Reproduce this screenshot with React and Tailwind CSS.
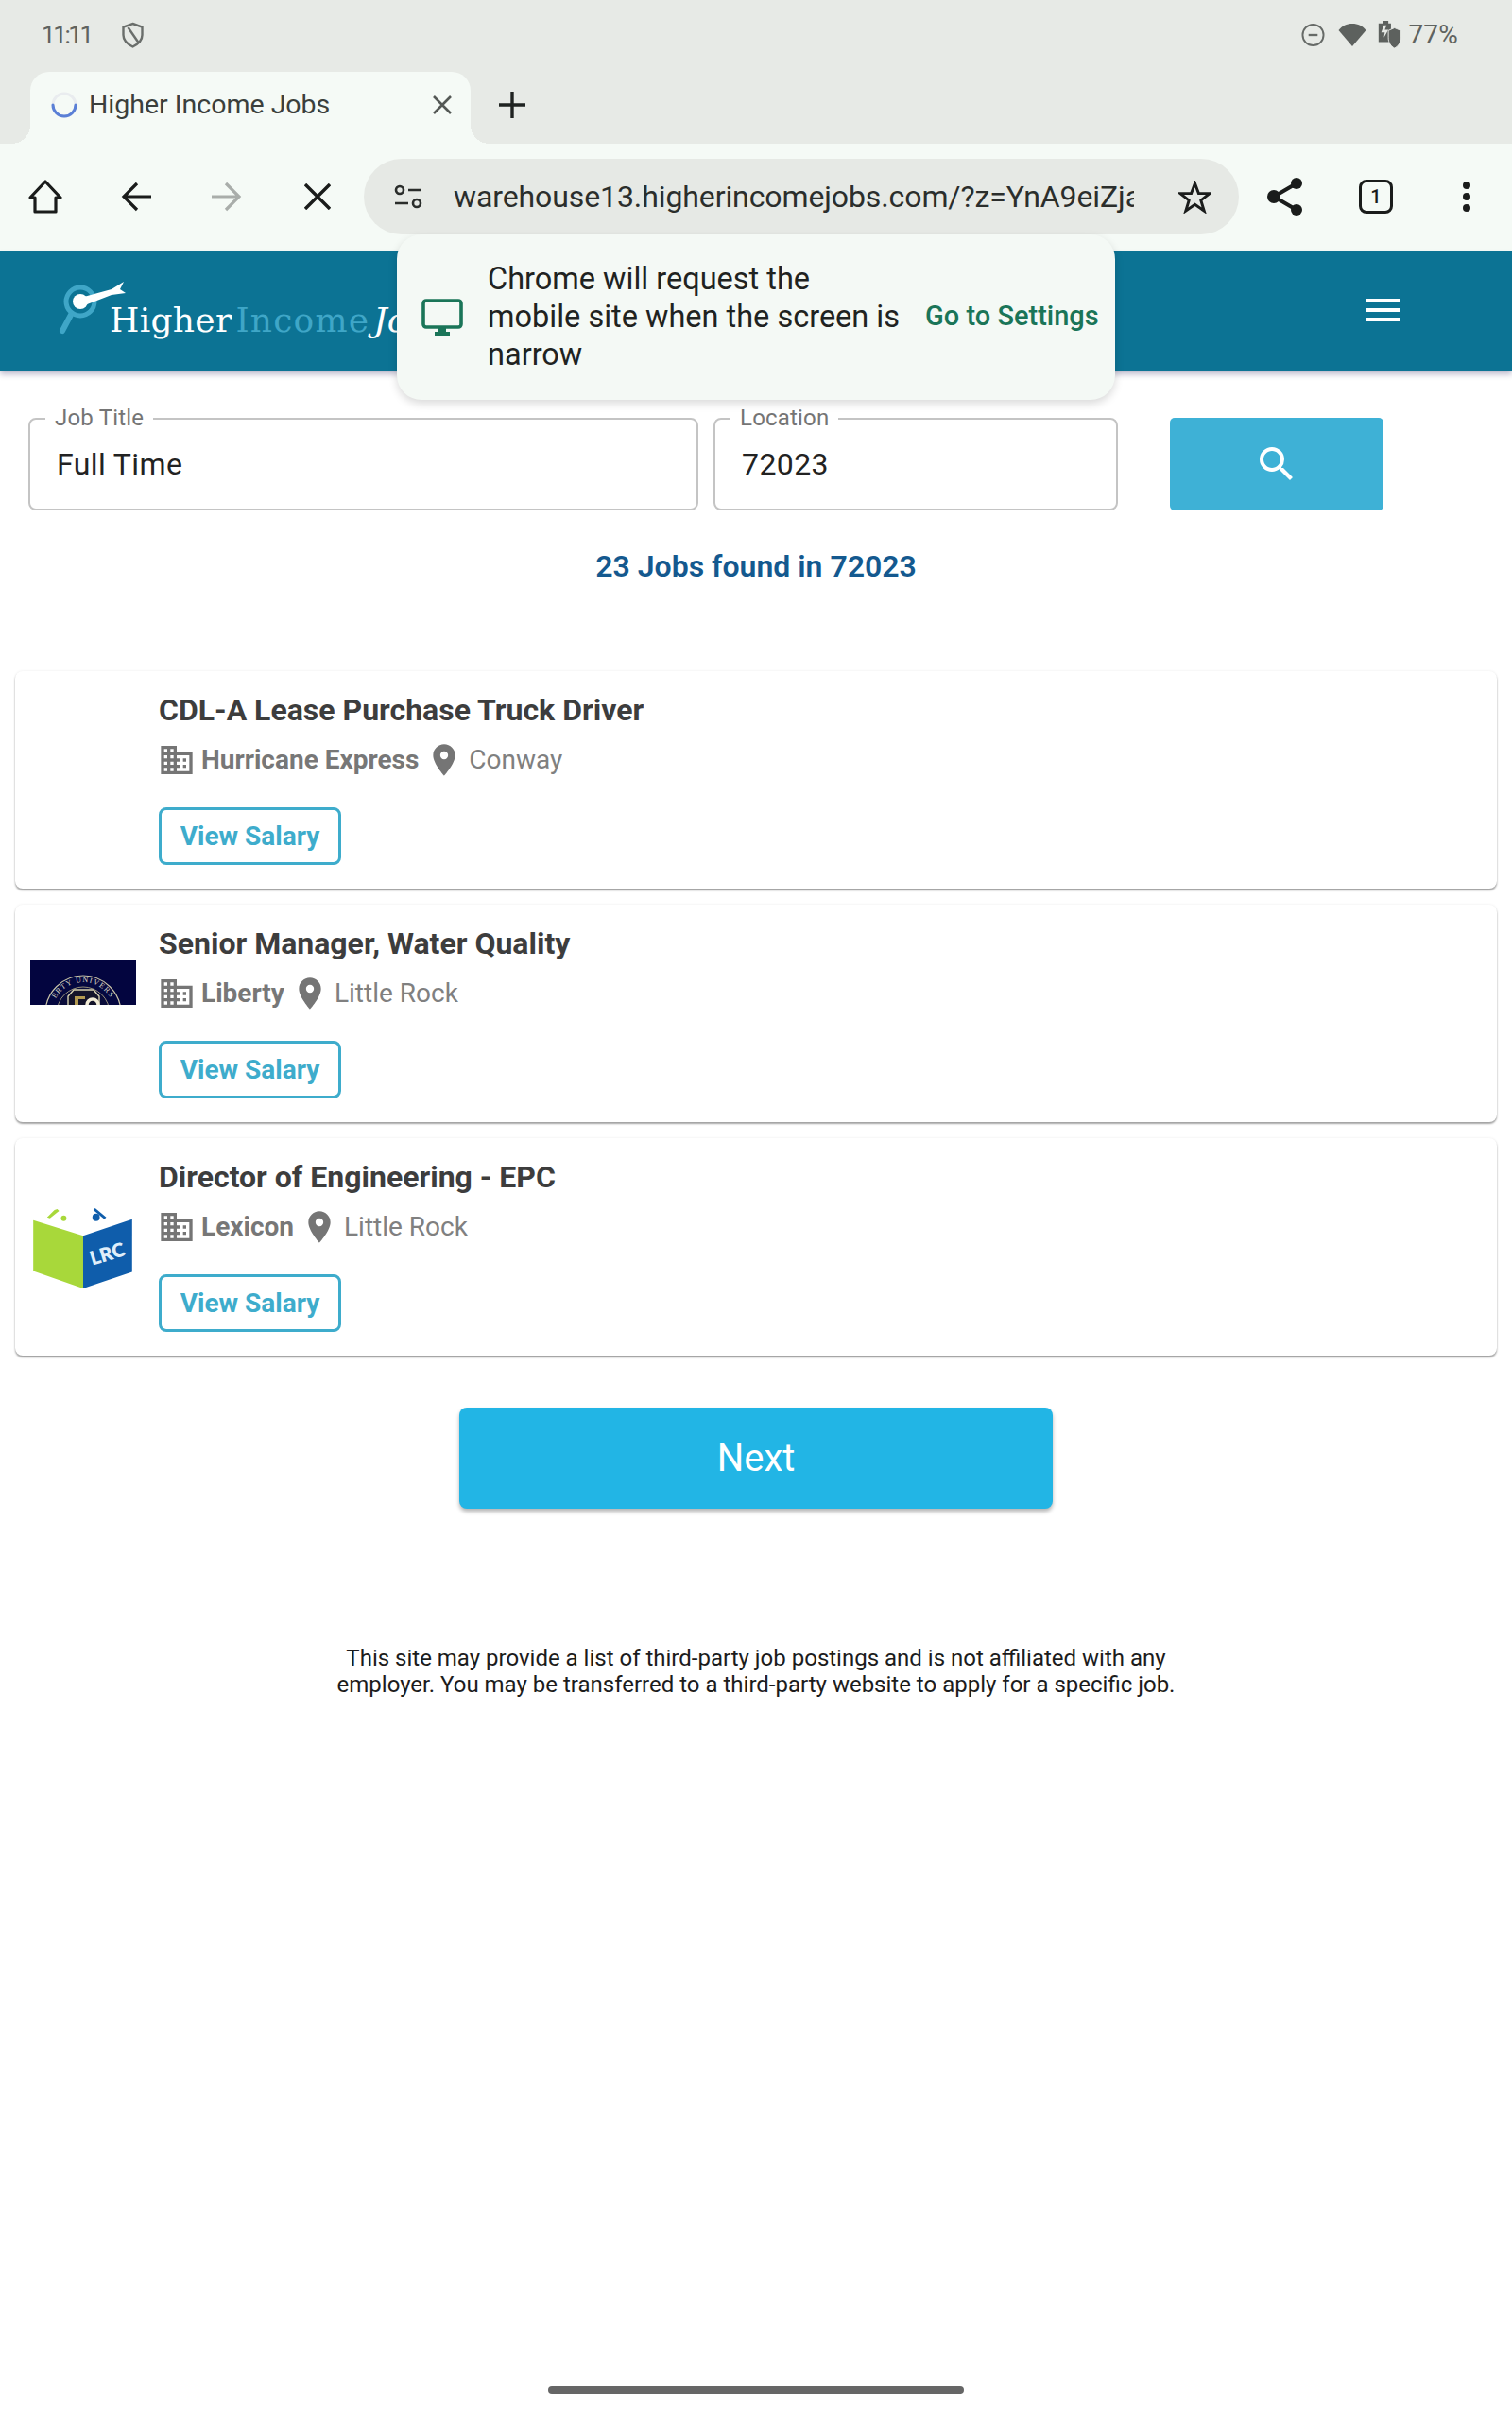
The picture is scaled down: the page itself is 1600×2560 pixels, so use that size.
import React from "react";
import { MdDomain, MdLocationOn, MdMenu, MdSearch } from "react-icons/md";

const roboto = "font-['Roboto',sans-serif]";

function Job({ title, company, place, logo, mt }) {
  return (
    <div className={`mx-4 ${mt} h-[230px] bg-white rounded-lg shadow-[0_2px_2px_rgba(0,0,0,0.35),0_0_3px_rgba(0,0,0,0.08)] flex`}>
      <div className="w-[152px] pl-4 shrink-0">{logo}</div>
      <div className="flex flex-col">
        <div className="mt-[21px] h-[40px] text-[32px] leading-[40px] font-bold text-[#3d3d3d]">{title}</div>
        <div className="mt-[13px] h-[40px] flex items-center text-[28px] text-[#777]">
          <MdDomain className="w-[40px] h-[40px] text-[#757575] -ml-[1px] mr-[6px]" />
          <span className="font-bold">{company}</span>
          <MdLocationOn className="w-[40px] h-[40px] text-[#757575] ml-[7px]" />
          <span className="ml-[6px] text-[#808080]">{place}</span>
        </div>
        <div className="mt-[30px] w-[193px] h-[61px] border-[3px] border-[#3eaccc] rounded-lg flex items-center justify-center text-[28px] font-bold text-[#3eaccc]">
          View Salary
        </div>
      </div>
    </div>
  );
}

function Field({ label, value, className }) {
  return (
    <div className={`relative h-[98px] border-2 border-[#c4c4c4] rounded-lg flex items-center ${className}`}>
      <span className="absolute -top-[14px] left-[16px] bg-white px-[10px] text-[24px] leading-[24px] tracking-[0.2px] text-[#757575]">{label}</span>
      <span className="pl-[28px] text-[32px] tracking-[0.4px] text-[#222]">{value}</span>
    </div>
  );
}

const Liberty = (
  <div className="w-[112px] h-[47px] mt-[59px] bg-[#03053f] overflow-hidden">
    <svg viewBox="0 0 112 47" className="w-full h-full">
      <defs>
        <path id="seal-arc" d="M23 56 A33 33 0 0 1 89 56" />
      </defs>
      <circle cx="56" cy="56" r="40" fill="#050840" stroke="#c9c4a8" strokeWidth="1.2" />
      <circle cx="56" cy="56" r="28" fill="#0a0c3a" stroke="#bdb28a" strokeWidth="0.8" />
      <text fontSize="8" fill="#dcd8c6" fontFamily="'Liberation Serif', serif" letterSpacing="1.2">
        <textPath href="#seal-arc" startOffset="16">ERTY UNIVERS</textPath>
      </text>
      <path d="M40 47 V38 L46 31 H67 L73 38 V47" fill="#14142a" stroke="#d8d2b0" strokeWidth="1.4" />
      <path d="M47 47 V38 H58 V41 H51 V47 Z" fill="#b39a52" />
      <circle cx="66" cy="47" r="6" fill="none" stroke="#f2ecd6" strokeWidth="3.5" />
    </svg>
  </div>
);

const Lrc = (
  <svg viewBox="0 0 112 90" className="mt-[73px] w-[110px] h-[88px]">
    <path d="M3 14 L57 31 V88 L3 69 Z" fill="#a8d83a" />
    <path d="M57 31 L110 13 V70 L57 88 Z" fill="#0f5dab" />
    <path d="M29 2 L26 3 L18 11 L21 12 L31 4 Z" fill="#a8d83a" />
    <circle cx="36" cy="12" r="3" fill="#a8d83a" />
    <path d="M70 1 L82 11 L80 13 L68 3 Z" fill="#0f5dab" />
    <circle cx="71" cy="11" r="4" fill="#0f5dab" />
    <g transform="rotate(-17 83 50)">
      <text x="83" y="58" textAnchor="middle" fontSize="21" fontWeight="800" fill="#dfeefa" fontFamily="Lato, sans-serif">LRC</text>
    </g>
  </svg>
);

const Empty = <div className="w-[112px]" />;

export default function App() {
  return (
    <div className={`relative h-[2560px] bg-white overflow-hidden flex flex-col ${roboto}`}>
      {/* status */}
      <div className="h-[76px] bg-[#e7eae6] flex items-center justify-between pl-[44px] pr-[57px] pb-[2px] text-[#5f6360]">
        <div className="flex items-center gap-[31px]">
          <span className="text-[26px] tracking-[-2.4px]">11:11</span>
          <svg viewBox="0 0 24 28" className="w-[25px] h-[28px]" fill="none" stroke="#6a6e6b" strokeWidth="2.4">
            <path d="M12 2 L22 5.5 V14 C22 20 17 24 12 26.5 C7 24 2 20 2 14 V5.5 Z" />
            <path d="M7 6 L18 22" />
          </svg>
        </div>
        <div className="flex items-center">
          <svg viewBox="0 0 26 26" className="w-[25px] h-[26px]" fill="none" stroke="#666a67" strokeWidth="2">
            <circle cx="13" cy="13" r="11.5" />
            <path d="M8 13 H18" strokeWidth="2.4" />
          </svg>
          <svg viewBox="0 0 30 26" className="ml-[14px] w-[30px] h-[26px]">
            <path d="M15 25 L0.5 8 C4 3.5 9 1 15 1 C21 1 26 3.5 29.5 8 Z" fill="#5d615e" />
          </svg>
          <svg viewBox="0 0 26 32" className="ml-[12px] w-[26px] h-[30px]">
            <path d="M5 0 H11 V3 H14 V24 H0 V3 H5 Z" fill="#5d615e" />
            <path d="M6 5 L3 13 H7 L6 19 L11 10 H7 L9 5 Z" fill="#e7eae6" />
            <path d="M18 8 L25 11 V19 C25 25 22 29 18 31 C14 29 11 25 11 19 V11 Z" fill="#5d615e" stroke="#e7eae6" strokeWidth="1" />
          </svg>
          <span className="ml-[6px] text-[28px] tracking-[0.2px]">77%</span>
        </div>
      </div>

      {/* tab strip */}
      <div className="h-[76px] bg-[#e7eae6] flex items-center relative">
        <div className="absolute left-[12px] bottom-0 w-[20px] h-[20px] bg-[radial-gradient(circle_at_0_0,#e7eae6_20px,#f5faf6_20px)]" />
        <div className="absolute left-[498px] bottom-0 w-[20px] h-[20px] bg-[radial-gradient(circle_at_100%_0,#e7eae6_20px,#f5faf6_20px)]" />
        <div className="ml-[32px] w-[466px] h-[76px] pb-[6px] bg-[#f5faf6] rounded-t-[20px] flex items-center">
          <svg viewBox="0 0 30 30" className="ml-[21px] w-[30px] h-[30px]" fill="none" strokeLinecap="round">
            <circle cx="15" cy="15" r="12" stroke="#e9ecef" strokeWidth="3" />
            <path d="M3 15 A12 12 0 0 0 27 15" stroke="#5a7fd6" strokeWidth="3" />
          </svg>
          <span className="ml-[11px] text-[28.5px] text-[#3b3f3c]">Higher Income Jobs</span>
          <svg viewBox="0 0 24 24" className="ml-auto mr-[18px] w-[24px] h-[24px]" fill="none" stroke="#545855" strokeWidth="2.6">
            <path d="M3 3 L21 21 M21 3 L3 21" />
          </svg>
        </div>
        <svg viewBox="0 0 28 28" className="ml-[30px] -mt-[6px] w-[28px] h-[28px]" fill="none" stroke="#1f2321" strokeWidth="3.4">
          <path d="M14 0 V28 M0 14 H28" />
        </svg>
      </div>

      {/* toolbar */}
      <div className="h-[114px] pb-[2px] bg-[#f5faf6] flex items-center relative">
        <svg viewBox="0 0 36 36" className="ml-[30px] w-[36px] h-[36px]" fill="none" stroke="#1a1c1b" strokeWidth="3.2" strokeLinejoin="round">
          <path d="M18 2 L34 19 H29 V34 H7 V19 H2 Z" />
        </svg>
        <svg viewBox="0 0 32 32" className="ml-[62px] w-[32px] h-[32px]" fill="none" stroke="#1a1c1b" strokeWidth="3.2">
          <path d="M17 2 L3 16 L17 30 M3 16 H32" />
        </svg>
        <svg viewBox="0 0 32 32" className="ml-[64px] w-[32px] h-[32px]" fill="none" stroke="#a9adaa" strokeWidth="3.2">
          <path d="M15 2 L29 16 L15 30 M29 16 H0" />
        </svg>
        <svg viewBox="0 0 28 28" className="ml-[66px] w-[28px] h-[28px]" fill="none" stroke="#1a1c1b" strokeWidth="3.4">
          <path d="M1 1 L27 27 M27 1 L1 27" />
        </svg>
        <div className="ml-[35px] w-[926px] h-[80px] rounded-full bg-[#e6e9e5] flex items-center">
          <svg viewBox="0 0 30 26" className="ml-[32px] w-[30px] h-[26px]" fill="none" stroke="#2a2d2b" strokeWidth="2.6">
            <circle cx="6" cy="6" r="4" />
            <path d="M15 6 H29 M1 20 H15" />
            <circle cx="24" cy="20" r="4" />
          </svg>
          <span className="ml-[33px] w-[720px] overflow-hidden whitespace-nowrap text-[32px] tracking-[-0.1px] text-[#2b2e2c]">warehouse13.higherincomejobs.com/?z=YnA9eiZja</span>
          <svg viewBox="0 0 36 36" className="ml-[47px] w-[35px] h-[35px]" fill="none" stroke="#1a1c1b" strokeWidth="3" strokeLinejoin="miter">
            <path d="M18 3 L22 14 H34 L24.5 21.5 L28 33 L18 26 L8 33 L11.5 21.5 L2 14 H14 Z" />
          </svg>
        </div>
        <svg viewBox="0 0 38 40" className="ml-[30px] w-[38px] h-[40px]">
          <path d="M31 6 L7 20 L31 34" fill="none" stroke="#1a1c1b" strokeWidth="4" />
          <circle cx="31" cy="6" r="6" fill="#1a1c1b" />
          <circle cx="31" cy="34" r="6" fill="#1a1c1b" />
          <circle cx="7" cy="20" r="7" fill="#1a1c1b" />
        </svg>
        <div className="ml-[59px] w-[36px] h-[36px] rounded-[8px] border-[3px] border-[#1a1c1b] flex items-center justify-center text-[20px] font-medium text-[#1a1c1b]">1</div>
        <div className="ml-[74px] flex flex-col gap-[4px]">
          <span className="block w-[8px] h-[8px] rounded-full bg-[#1a1c1b]" />
          <span className="block w-[8px] h-[8px] rounded-full bg-[#1a1c1b]" />
          <span className="block w-[8px] h-[8px] rounded-full bg-[#1a1c1b]" />
        </div>
      </div>

      {/* site header */}
      <div className="h-[126px] bg-[#0c7394] shadow-[0_4px_6px_rgba(40,30,90,0.3)] relative">
        <svg viewBox="0 0 80 65" className="absolute left-[60px] top-[29px] w-[80px] h-[65px]">
          <circle cx="25" cy="24" r="15" fill="none" stroke="#3fa6c7" strokeWidth="5" />
          <path d="M15 38 L6 55" stroke="#3fa6c7" strokeWidth="6" strokeLinecap="round" />
          <circle cx="25" cy="24" r="8" fill="#fff" />
          <path d="M25 20 L58 11 L71 3 L67 11 L73 15 L58 17 L27 29 Z" fill="#fff" />
        </svg>
        <span className="absolute left-[116px] top-[48px] flex whitespace-nowrap text-[36px] leading-[50px] font-['DejaVu_Serif',serif] text-white">
          <span className="tracking-[0.3px]">Higher</span>
          <span className="ml-[4px] tracking-[1.2px] text-[#3fa6c7]">Income</span>
          <span className="ml-[4px] italic">Jobs</span>
        </span>
        <MdMenu className="absolute left-[1440px] top-[38px] w-[48px] h-[48px] text-white" />
      </div>

      {/* search row */}
      <div className="mt-[50px] flex items-start">
        <Field label="Job Title" value="Full Time" className="ml-[30px] w-[709px]" />
        <Field label="Location" value="72023" className="ml-[16px] w-[428px]" />
        <div className="ml-[55px] w-[226px] h-[98px] bg-[#3eb1d6] rounded-[5px] flex items-center justify-center">
          <MdSearch className="w-[48px] h-[48px] text-white" />
        </div>
      </div>

      <div className="mt-[37px] h-[44px] text-center text-[32px] leading-[44px] font-semibold text-[#14598f]">23 Jobs found in 72023</div>

      <Job mt="mt-[89px]" title="CDL-A Lease Purchase Truck Driver" company="Hurricane Express" place="Conway" logo={Empty} />
      <Job mt="mt-[17px]" title="Senior Manager, Water Quality" company="Liberty" place="Little Rock" logo={Liberty} />
      <Job mt="mt-[17px]" title="Director of Engineering - EPC" company="Lexicon" place="Little Rock" logo={Lrc} />

      <div className="mt-[55px] mx-auto w-[628px] h-[107px] bg-[#22b5e5] rounded-lg shadow-[0_3px_4px_rgba(0,0,0,0.3)] flex items-center justify-center text-[40px] text-white">Next</div>

      <div className="mt-[144px] text-center text-[24px] leading-[28px] text-[#1c1c1c]">
        This site may provide a list of third-party job postings and is not affiliated with any<br />
        employer. You may be transferred to a third-party website to apply for a specific job.
      </div>

      <div className="mt-auto mb-[28px] mx-auto w-[440px] h-[8px] rounded-full bg-[#666]" />

      {/* desktop-site popup */}
      <div className="absolute left-[420px] top-[248px] w-[760px] h-[175px] pb-[2px] rounded-[26px] bg-[#f4f9f5] shadow-[0_4px_10px_rgba(0,0,0,0.15)] flex items-center">
        <svg viewBox="0 0 44 40" className="ml-[26px] w-[44px] h-[40px] mt-[2px] shrink-0">
          <rect x="2" y="2" width="40" height="28" rx="3" fill="none" stroke="#1a7558" strokeWidth="3.6" />
          <rect x="18" y="30" width="8" height="5" fill="#1a7558" />
          <rect x="14" y="35" width="16" height="4" fill="#1a7558" />
        </svg>
        <div className="ml-[26px] w-[444px] text-[32.5px] leading-[40px] text-[#1f2321]">Chrome will request the<br />mobile site when the screen is<br />narrow</div>
        <span className="ml-[19px] text-[29px] font-medium text-[#1a7558] whitespace-nowrap">Go to Settings</span>
      </div>
    </div>
  );
}
